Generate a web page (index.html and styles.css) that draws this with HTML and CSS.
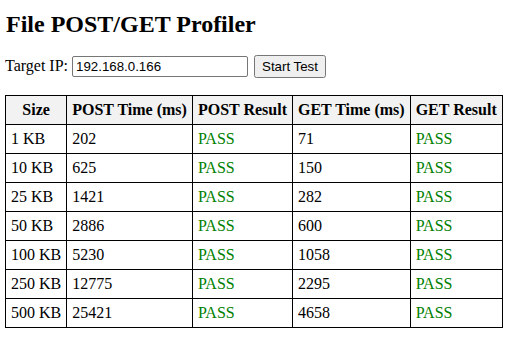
FILE: index.html
```html
<!DOCTYPE html>
<html lang="en">
<head>
    <meta charset="UTF-8">
    <title>File POST/GET Profiler</title>
    <link rel="stylesheet" href="styles.css">
</head>
<body>
    <h1>File POST/GET Profiler</h1>

    <div class="controls">
        <label for="ip">Target IP:</label>
        <input type="text" id="ip" value="192.168.0.166">
        <button id="startBtn">Start Test</button>
    </div>

    <table class="results">
        <thead>
            <tr>
                <th>Size</th>
                <th>POST Time (ms)</th>
                <th>POST Result</th>
                <th>GET Time (ms)</th>
                <th>GET Result</th>
            </tr>
        </thead>
        <tbody>
            <tr><td>1 KB</td><td>202</td><td class="pass">PASS</td><td>71</td><td class="pass">PASS</td></tr>
            <tr><td>10 KB</td><td>625</td><td class="pass">PASS</td><td>150</td><td class="pass">PASS</td></tr>
            <tr><td>25 KB</td><td>1421</td><td class="pass">PASS</td><td>282</td><td class="pass">PASS</td></tr>
            <tr><td>50 KB</td><td>2886</td><td class="pass">PASS</td><td>600</td><td class="pass">PASS</td></tr>
            <tr><td>100 KB</td><td>5230</td><td class="pass">PASS</td><td>1058</td><td class="pass">PASS</td></tr>
            <tr><td>250 KB</td><td>12775</td><td class="pass">PASS</td><td>2295</td><td class="pass">PASS</td></tr>
            <tr><td>500 KB</td><td>25421</td><td class="pass">PASS</td><td>4658</td><td class="pass">PASS</td></tr>
        </tbody>
    </table>
</body>
</html>
```

FILE: styles.css
```css
body {
    font-family: 'Liberation Serif', 'Times New Roman', serif;
    font-size: 16px;
    margin: 5px;
    color: #000;
}
h1 {
    font-size: 24px;
    margin: 6px 1px 17px;
}
.controls {
    margin-bottom: 17px;
}
input[type="text"] {
    font-family: 'Liberation Sans', Arial, sans-serif;
    font-size: 13.3px;
    width: 168px;
    padding: 2px 3px;
    border: 1px solid #767676;
    border-radius: 2px;
}
button {
    font-family: 'Liberation Sans', Arial, sans-serif;
    font-size: 13.3px;
    padding: 2px 6px;
    margin-left: 2px;
}
.results {
    border-collapse: collapse;
}
.results th,
.results td {
    border: 1px solid #000;
    padding: 5px;
    text-align: left;
}
.results th {
    background: #f2f2f2;
    text-align: center;
}
.pass {
    color: green;
}
```
